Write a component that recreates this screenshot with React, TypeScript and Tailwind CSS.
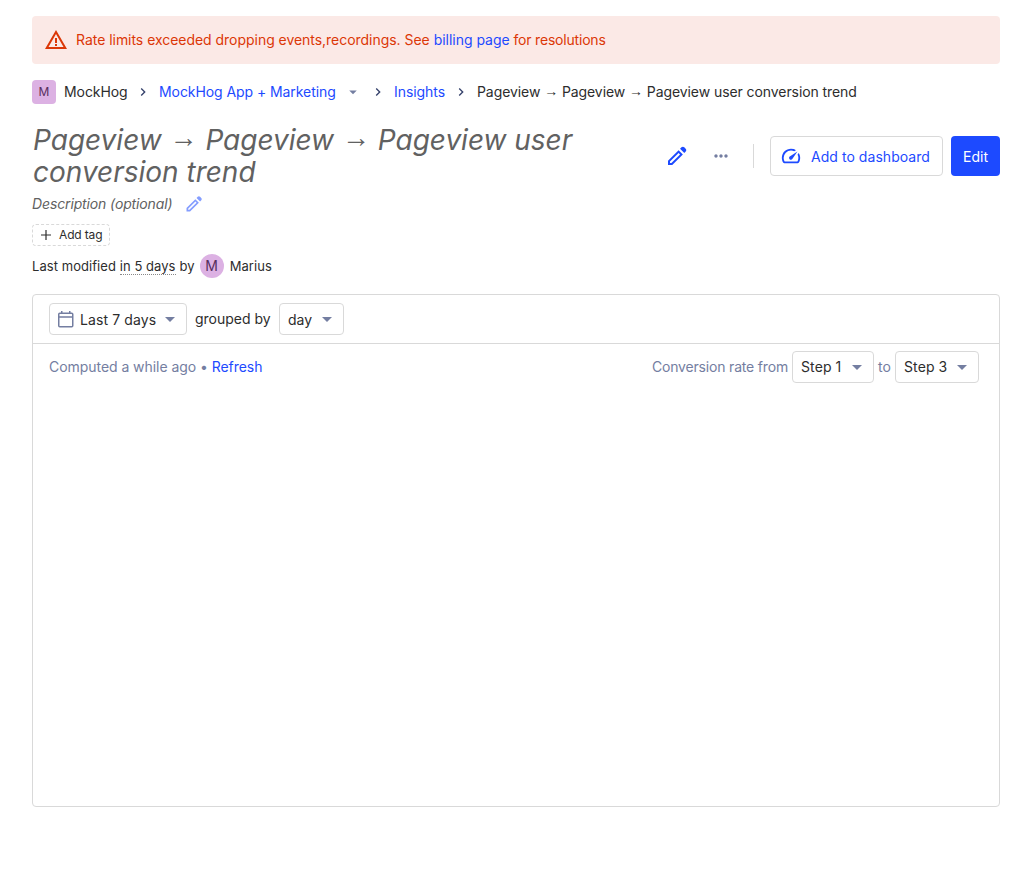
import React from 'react'
import { MdArrowDropDown, MdChevronRight, MdMoreHoriz, MdWarningAmber } from 'react-icons/md'

function IconPencil({ className }: { className: string }) {
    return (
        <svg viewBox="0 0 24 24" fill="currentColor" className={className}>
            <path d="M5 19h1.4l8.625-8.625-1.4-1.4L5 17.6ZM19.3 8.925l-4.25-4.2 1.4-1.4q.575-.575 1.413-.575.837 0 1.412.575l1.4 1.4q.575.575.6 1.388.025.812-.55 1.387ZM17.85 10.4 7.25 21H3v-4.25l10.6-10.6Zm-3.525-.725-.7-.7 1.4 1.4Z" />
        </svg>
    )
}

function IconGauge({ className }: { className: string }) {
    return (
        <svg viewBox="0 0 24 24" fill="currentColor" className={className}>
            <path d="M10.45 15.5q.625.625 1.575.588.95-.038 1.4-.688L19 7l-8.4 5.6q-.675.45-.712 1.375-.038.925.562 1.525ZM12 4q1.475 0 2.838.412Q16.2 4.825 17.4 5.65l-1.9 1.2q-.825-.425-1.712-.638Q12.9 6 12 6 8.675 6 6.338 8.337 4 10.675 4 14q0 1.05.287 2.075Q4.575 17.1 5.1 18h13.8q.575-.95.838-1.975Q20 15 20 13.9q0-.9-.212-1.75-.213-.85-.638-1.65l1.2-1.9q.75 1.175 1.188 2.5.437 1.325.462 2.75.025 1.425-.325 2.725-.35 1.3-1.025 2.475-.275.45-.75.7-.475.25-1 .25H5.1q-.525 0-1-.25t-.75-.7q-.65-1.125-1-2.387Q2 15.4 2 14q0-2.075.788-3.888.787-1.812 2.15-3.175Q6.3 5.575 8.125 4.787 9.95 4 12 4Z" />
        </svg>
    )
}

function IconCalendar({ className }: { className: string }) {
    return (
        <svg viewBox="0 0 18 18" fill="none" stroke="currentColor" strokeWidth="1.5" className={className}>
            <rect x="1.75" y="3.25" width="14" height="13.5" rx="1" />
            <path d="M1.75 7h14M4.75 1v2.5M12.75 1v2.5" />
        </svg>
    )
}

function IconPlus({ className }: { className: string }) {
    return (
        <svg viewBox="0 0 14 14" fill="none" stroke="currentColor" strokeWidth="1.2" className={className}>
            <path d="M7 2v10M2 7h10" />
        </svg>
    )
}

function Arrow() {
    return <span className="align-[0.1em] font-['Liberation_Sans',sans-serif] leading-[0]">→</span>
}

function Select({ label, className, icon }: { label: string; className: string; icon?: React.ReactNode }) {
    return (
        <button
            className={`flex h-8 shrink-0 items-center rounded border border-[#d9d9d9] bg-white pl-2 tracking-normal text-[#2d2d2d] ${className}`}
        >
            {icon}
            <span className="whitespace-nowrap">{label}</span>
            <MdArrowDropDown className="ml-auto mr-1 size-6 text-[#747ea1]" />
        </button>
    )
}

function Separator() {
    return <MdChevronRight className="mx-2 size-4 shrink-0 text-[#35416b]" />
}

export default function App() {
    return (
        <div className="h-[887px] bg-white px-8 pt-4 font-['Inter','Liberation_Sans',sans-serif] text-sm leading-[22px] text-[#2d2d2d]">
            <div className="flex h-12 items-center rounded bg-[#fbe9e6] px-3 text-[#db3707]">
                <MdWarningAmber className="mr-2 size-6" />
                <p className="tracking-[-0.035px]">
                    Rate limits exceeded dropping events,recordings. See{' '}
                    <a className="tracking-[-0.02px] text-[#1d4aff]">billing page</a>{' '}
                    <span className="tracking-[-0.2px]">for resolutions</span>
                </p>
            </div>

            <nav className="mt-4 flex h-6 items-center whitespace-nowrap tracking-[-0.07px]">
                <span className="mr-2 flex size-6 items-center justify-center rounded bg-[#dcb1e3] text-xs text-[#572e5e]">
                    M
                </span>
                <span className="w-[63px]">MockHog</span>
                <Separator />
                <a className="w-[177px] text-[#1d4aff]">MockHog App + Marketing</a>
                <MdArrowDropDown className="ml-2 size-[18px] text-[#747ea1]" />
                <Separator />
                <a className="w-[51px] text-[#1d4aff]">Insights</a>
                <Separator />
                <span className="tracking-[-0.08px]">
                    Pageview <Arrow /> Pageview <Arrow /> Pageview user conversion trend
                </span>
            </nav>

            <header className="mt-5 flex items-start justify-between">
                <div>
                    <h1 className="h-16 w-[600px] pl-px text-[28px] italic leading-8 tracking-[-0.01px] text-[#616161]">
                        Pageview <Arrow /> Pageview <Arrow /> Pageview user conversion trend
                    </h1>
                    <div className="mt-1 flex h-6 items-center italic text-[#616161]">
                        <span className="w-[140px] whitespace-nowrap tracking-[-0.13px]">Description (optional)</span>
                        <IconPencil className="ml-3 size-5 text-[#849dff]" />
                    </div>
                    <button className="mt-2 flex h-[22px] w-[78px] items-center rounded border border-dashed border-[#d9d9d9] pl-1.5 text-xs tracking-[-0.15px]">
                        <IconPlus className="mr-1.5 size-3.5" />
                        Add tag
                    </button>
                    <div className="mt-2 flex h-6 items-center text-[13px] tracking-[0.06px]">
                        <span className="whitespace-pre">Last modified </span>
                        <span className="h-[18px] border-b border-dotted border-[#888888] leading-[18px]">in 5 days</span>
                        <span className="ml-1">by</span>
                        <span className="ml-[5px] mr-1.5 flex size-6 items-center justify-center rounded-full bg-[#dcb1e3] text-sm text-[#572e5e]">
                            M
                        </span>
                        <span>Marius</span>
                    </div>
                </div>
                <div className="mt-3 flex h-10 items-center">
                    <IconPencil className="mr-[22px] size-6 text-[#1d4aff]" />
                    <MdMoreHoriz className="size-5 text-[#747ea1]" />
                    <span className="ml-[22px] mr-4 h-6 w-px bg-[#d9d9d9]" />
                    <button className="mr-2 flex h-10 w-[173px] items-center rounded border border-[#d9d9d9] pl-[9px] text-[#1d4aff]">
                        <IconGauge className="mr-[9px] size-[22px]" />
                        <span className="pt-0.5 tracking-[0.05px]">Add to dashboard</span>
                    </button>
                    <button className="h-10 w-[49px] rounded bg-[#1d4aff] pt-0.5 text-white">Edit</button>
                </div>
            </header>

            <section className="mt-4 h-[513px] rounded border border-[#d9d9d9]">
                <div className="flex h-[49px] items-center gap-2 border-b border-[#d9d9d9] px-4">
                    <Select
                        label="Last 7 days"
                        className="w-[138px] [&>span]:pt-0.5 [&>span]:tracking-[0.1px]"
                        icon={<IconCalendar className="-ml-px mr-[5px] size-[18px] text-[#747ea1]" />}
                    />
                    <span className="w-[76px]">grouped by</span>
                    <Select label="day" className="w-[65px] [&>span]:pt-0.5" />
                </div>
                <div className="flex h-[46px] items-center justify-between pl-4 pr-5 text-[#747ea1]">
                    <p className="tracking-[-0.05px]">
                        Computed a while ago • <a className="text-[#1d4aff]">Refresh</a>
                    </p>
                    <div className="flex items-center">
                        <span className="mr-1 tracking-[-0.18px]">Conversion rate from</span>
                        <Select label="Step 1" className="w-[82px] [&>span]:tracking-[0.1px]" />
                        <span className="ml-1 w-[17px]">to</span>
                        <Select label="Step 3" className="w-[84px] [&>span]:tracking-[0.1px]" />
                    </div>
                </div>
            </section>
        </div>
    )
}
